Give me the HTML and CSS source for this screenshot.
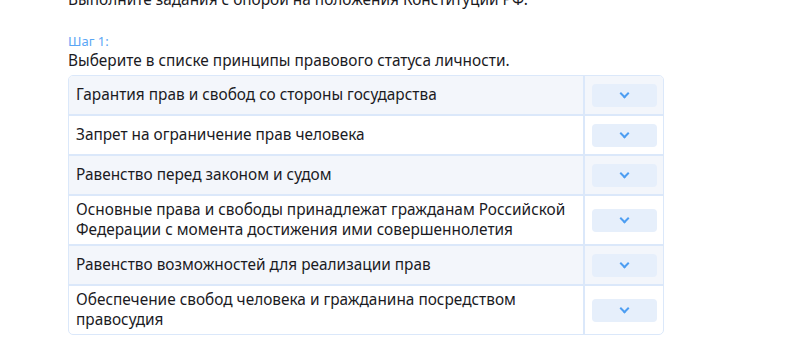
FILE: index.html
```html
<!DOCTYPE html>
<html lang="ru">

<head>
    <meta charset="UTF-8">
    <title>Шаг 1</title>
    <link rel="stylesheet" href="styles.css">
</head>

<body>
    <div class="task">
        <p class="task__intro">Выполните задания с опорой на положения Конституции РФ.</p>

        <div class="step">
            <div class="step__label">Шаг 1:</div>
            <div class="step__title">Выберите в списке принципы правового статуса личности.</div>

            <table class="choices">
                <tr class="odd">
                    <td class="choices__text">Гарантия прав и свобод со стороны государства</td>
                    <td class="choices__pick"><button class="select"><span class="chev"></span></button></td>
                </tr>
                <tr>
                    <td class="choices__text">Запрет на ограничение прав человека</td>
                    <td class="choices__pick"><button class="select"><span class="chev"></span></button></td>
                </tr>
                <tr class="odd">
                    <td class="choices__text">Равенство перед законом и судом</td>
                    <td class="choices__pick"><button class="select"><span class="chev"></span></button></td>
                </tr>
                <tr>
                    <td class="choices__text">Основные права и свободы принадлежат гражданам Российской Федерации с момента достижения ими совершеннолетия</td>
                    <td class="choices__pick"><button class="select"><span class="chev"></span></button></td>
                </tr>
                <tr class="odd">
                    <td class="choices__text">Равенство возможностей для реализации прав</td>
                    <td class="choices__pick"><button class="select"><span class="chev"></span></button></td>
                </tr>
                <tr>
                    <td class="choices__text">Обеспечение свобод человека и гражданина посредством правосудия</td>
                    <td class="choices__pick"><button class="select"><span class="chev"></span></button></td>
                </tr>
            </table>
        </div>
    </div>
</body>

</html>
```

FILE: styles.css
```css
/* styles.css */

body {
    font-family: "Noto Sans", Arial, sans-serif;
    margin: 0;
    padding: 0;
    background-color: #ffffff;
    color: #1b1b1f;
}

.task {
    padding-left: 68px;
    width: 596px;
}

.task__intro {
    margin: -10px 0 0 0;
    font-size: 15.4px;
    line-height: 20px;
}

.step {
    margin-top: 23px;
}

.step__label {
    font-size: 13px;
    line-height: 16px;
    color: #5aa6f5;
    margin-bottom: 2px;
}

.step__title {
    font-size: 15.4px;
    line-height: 20px;
    margin-bottom: 4px;
}

.choices {
    width: 100%;
    border-collapse: separate;
    border-spacing: 0;
    border: 1px solid #dbe8fa;
    border-radius: 5px;
    overflow: hidden;
}

.choices td {
    border-bottom: 2px solid #dbe8fa;
    font-size: 15.4px;
    line-height: 20px;
}

.choices tr:last-child td {
    border-bottom: none;
}

.choices tr.odd td {
    background-color: #f3f6fb;
}

.choices__text {
    padding: 4px 8px 4px 7px;
    border-right: 2px solid #dbe8fa;
}

.choices__pick {
    width: 65px;
    padding: 8px 6px 7px 7px;
}

.select {
    display: flex;
    align-items: center;
    justify-content: center;
    width: 65px;
    height: 23px;
    border: none;
    border-radius: 4px;
    background-color: #e6effb;
    padding: 0;
    cursor: pointer;
}

.chev {
    width: 5px;
    height: 5px;
    border-right: 2px solid #4d9ef2;
    border-bottom: 2px solid #4d9ef2;
    transform: translateY(-2px) rotate(45deg);
}
```
